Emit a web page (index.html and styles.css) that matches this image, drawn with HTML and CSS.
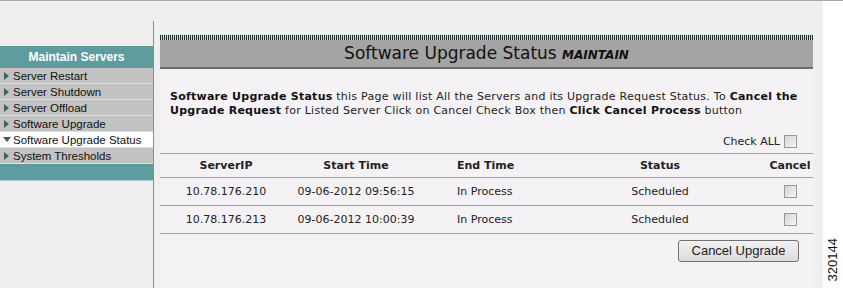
FILE: index.html
```html
<!DOCTYPE html>
<html lang="en">
<head>
    <meta charset="UTF-8">
    <title>Software Upgrade Status</title>
    <link rel="stylesheet" href="styles.css">
</head>
<body>
<div class="screen">
    <div class="page">
        <!-- Left menu -->
        <nav class="sidebar">
            <div class="side-head">Maintain Servers</div>
            <ul class="side-menu">
                <li><span class="arrow"></span>Server Restart</li>
                <li><span class="arrow"></span>Server Shutdown</li>
                <li><span class="arrow"></span>Server Offload</li>
                <li><span class="arrow"></span>Software Upgrade</li>
                <li class="active"><span class="arrow"></span>Software Upgrade Status</li>
                <li><span class="arrow"></span>System Thresholds</li>
            </ul>
            <div class="side-foot"></div>
        </nav>
        <div class="divider"></div>

        <!-- Main panel -->
        <main class="panel">
            <div class="panel-stripe"></div>
            <h1 class="panel-title">Software Upgrade Status <em>MAINTAIN</em></h1>

            <p class="intro"><b>Software Upgrade Status</b> this Page will list All the Servers and its Upgrade Request Status. To <b>Cancel the Upgrade Request</b> for Listed Server Click on Cancel Check Box then <b>Click Cancel Process</b> button</p>

            <div class="check-all">Check ALL <input type="checkbox" class="box"></div>

            <table class="upgrade-table">
                <colgroup>
                    <col class="c-ip"><col class="c-start"><col class="c-end"><col class="c-status"><col class="c-cancel">
                </colgroup>
                <thead>
                    <tr>
                        <th>ServerIP</th>
                        <th>Start Time</th>
                        <th class="left">End Time</th>
                        <th>Status</th>
                        <th>Cancel</th>
                    </tr>
                </thead>
                <tbody>
                    <tr>
                        <td>10.78.176.210</td>
                        <td>09-06-2012 09:56:15</td>
                        <td class="left">In Process</td>
                        <td>Scheduled</td>
                        <td><input type="checkbox" class="box"></td>
                    </tr>
                    <tr>
                        <td>10.78.176.213</td>
                        <td>09-06-2012 10:00:39</td>
                        <td class="left">In Process</td>
                        <td>Scheduled</td>
                        <td><input type="checkbox" class="box"></td>
                    </tr>
                </tbody>
            </table>

            <div class="actions">
                <button type="button" class="btn">Cancel Upgrade</button>
            </div>
        </main>
    </div>
    <div class="figure-id"><span>320144</span></div>
</div>
</body>
</html>
```

FILE: styles.css
```css
/* General */
* {
    margin: 0;
    padding: 0;
    box-sizing: border-box;
}

body {
    background-color: #fff;
    font-family: "DejaVu Sans", Verdana, sans-serif;
    font-size: 11px;
    color: #222;
}

.screen {
    display: flex;
    width: 843px;
    height: 288px;
    overflow: hidden;
    border-top: 1px solid #a9a9a9;
}

.page {
    display: flex;
    width: 823px;
    background-color: #efefef;
}

/* Sidebar */
.sidebar {
    width: 153px;
    padding-top: 45px;
    font-family: "Liberation Sans", Arial, sans-serif;
}

.side-head {
    height: 22px;
    line-height: 22px;
    background-color: #5f9c9e;
    color: #fff;
    font-weight: bold;
    font-size: 12px;
    text-align: center;
}

.side-menu {
    list-style: none;
}

.side-menu li {
    display: flex;
    align-items: center;
    height: 16px;
    padding-left: 4px;
    background-color: #c2c2c2;
    border-bottom: 1px solid #dedede;
    font-size: 11.5px;
    color: #111;
}

.side-menu .arrow {
    width: 0;
    height: 0;
    margin-right: 4px;
    border-top: 4px solid transparent;
    border-bottom: 4px solid transparent;
    border-left: 5px solid #3f5f5f;
}

.side-menu li.active {
    padding-left: 3px;
    background-color: #fff;
}

.side-menu li.active .arrow {
    margin-right: 2px;
    border-left: 4px solid transparent;
    border-right: 4px solid transparent;
    border-top: 5px solid #3f5f5f;
    border-bottom: 0;
}

.side-foot {
    height: 17px;
    background-color: #5f9c9e;
    border-bottom: 1px solid #b4c6cc;
}

.divider {
    width: 1px;
    margin-top: 20px;
    margin-right: 6px;
    background-color: #8d8d8d;
}

/* Main panel */
.panel {
    width: 653px;
    margin-top: 33px;
    background-color: #f5f2f5;
}

.panel-stripe {
    height: 6px;
    border-top: 1px solid #d6eaea;
    background-image: repeating-linear-gradient(to right, #1f2b2b 0 1px, #c8e0e0 1px 2px);
}

.panel-title {
    height: 29px;
    line-height: 26px;
    background-color: #a4a4a4;
    border-bottom: 2px solid #6c6c6c;
    font-size: 17px;
    font-weight: normal;
    color: #111;
    text-align: center;
}

.panel-title em {
    font-size: 12px;
    font-weight: bold;
    font-style: italic;
}

.intro {
    padding: 21px 8px 0 10px;
    line-height: 14px;
    letter-spacing: 0.25px;
    color: #222;
}

.intro b {
    color: #111;
}

.check-all {
    display: flex;
    justify-content: flex-end;
    align-items: center;
    gap: 4px;
    height: 22px;
    margin-top: 14px;
    padding: 0 16px 3px 0;
    border-bottom: 1px solid #a3a3a3;
}

.box {
    appearance: none;
    width: 13px;
    height: 13px;
    border: 1px solid #9a9a9a;
    background: linear-gradient(135deg, #d4d4d4, #f6f6f6);
    vertical-align: middle;
}

/* Table */
.upgrade-table {
    width: 653px;
    border-collapse: collapse;
    table-layout: fixed;
}

.c-ip { width: 132px; }
.c-start { width: 128px; }
.c-end { width: 133px; }
.c-status { width: 214px; }
.c-cancel { width: 46px; }

.upgrade-table th,
.upgrade-table td {
    text-align: center;
    border-bottom: 1px solid #a3a3a3;
    color: #222;
    white-space: nowrap;
}

.upgrade-table th {
    height: 23px;
    font-weight: bold;
}

.upgrade-table td {
    height: 28px;
    padding-top: 1px;
}

.upgrade-table .left {
    text-align: left;
    padding-left: 37px;
}

/* Button */
.actions {
    display: flex;
    justify-content: flex-end;
    padding: 6px 14px 0 0;
}

.btn {
    width: 121px;
    height: 22px;
    font-family: "Liberation Sans", Arial, sans-serif;
    font-size: 13px;
    color: #222;
    border: 1px solid #707070;
    border-radius: 3px;
    background: linear-gradient(#f2f2f2, #dcdcdc);
}

/* Figure number */
.figure-id {
    flex: 1;
    display: flex;
    align-items: flex-end;
    justify-content: center;
    padding: 0 2px 7px 0;
}

.figure-id span {
    writing-mode: vertical-rl;
    transform: rotate(180deg);
    font-family: "Liberation Sans", Arial, sans-serif;
    font-size: 13px;
    color: #111;
}
```
